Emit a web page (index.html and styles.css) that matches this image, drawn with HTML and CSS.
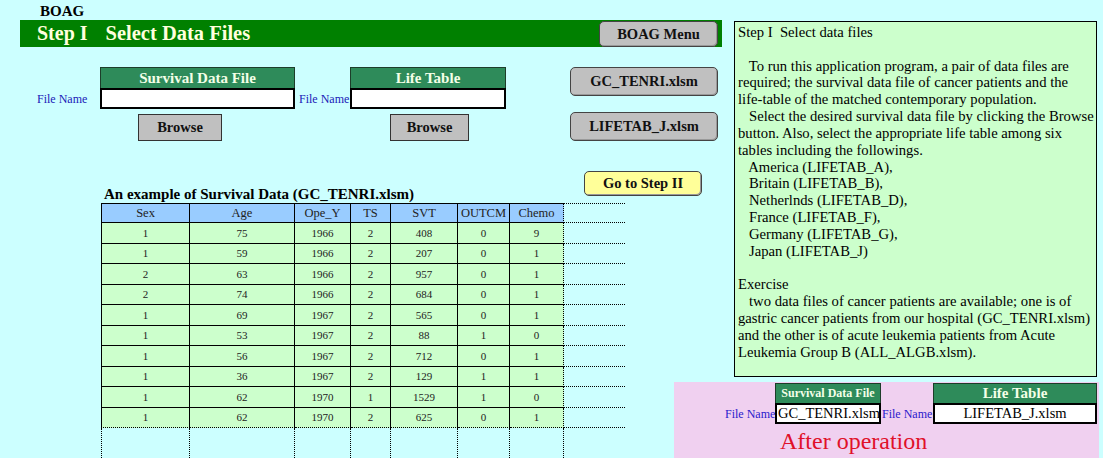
FILE: index.html
```html
<!DOCTYPE html>
<html>
<head>
<meta charset="utf-8">
<link rel="stylesheet" href="styles.css">
</head>
<body>
<div class="page">
  <div class="left">
    <div class="app-title">BOAG</div>
    <div class="band">
      <span class="band-step">Step I</span>
      <span class="band-title">Select Data Files</span>
      <div class="btn btn-round btn-menu">BOAG Menu</div>
    </div>

    <div class="files">
      <div class="fgroup fg1">
        <div class="flabel">File Name</div>
        <div class="fcol">
          <div class="fhead">Survival Data File</div>
          <div class="finput"></div>
          <div class="btn btn-browse b1">Browse</div>
        </div>
      </div>
      <div class="fgroup fg2">
        <div class="flabel">File Name</div>
        <div class="fcol">
          <div class="fhead">Life Table</div>
          <div class="finput"></div>
          <div class="btn btn-browse b2">Browse</div>
        </div>
      </div>
      <div class="samples">
        <div class="btn btn-round btn-sample">GC_TENRI.xlsm</div>
        <div class="btn btn-round btn-sample">LIFETAB_J.xlsm</div>
      </div>
    </div>

    <div class="example-row">
      <div class="example-title">An example of Survival Data (GC_TENRI.xlsm)</div>
      <div class="btn btn-round btn-go">Go to Step II</div>
    </div>

    <table class="data">
      <colgroup>
        <col style="width:89px"><col style="width:105px"><col style="width:56px"><col style="width:40px"><col style="width:67px"><col style="width:52px"><col style="width:54px"><col style="width:61px">
      </colgroup>
      <thead>
        <tr><th>Sex</th><th>Age</th><th>Ope_Y</th><th>TS</th><th>SVT</th><th>OUTCM</th><th class="last">Chemo</th><th class="extra"></th></tr>
      </thead>
      <tbody>
        <tr><td>1</td><td>75</td><td>1966</td><td>2</td><td>408</td><td>0</td><td class="last">9</td><td class="extra"></td></tr>
        <tr><td>1</td><td>59</td><td>1966</td><td>2</td><td>207</td><td>0</td><td class="last">1</td><td class="extra"></td></tr>
        <tr><td>2</td><td>63</td><td>1966</td><td>2</td><td>957</td><td>0</td><td class="last">1</td><td class="extra"></td></tr>
        <tr><td>2</td><td>74</td><td>1966</td><td>2</td><td>684</td><td>0</td><td class="last">1</td><td class="extra"></td></tr>
        <tr><td>1</td><td>69</td><td>1967</td><td>2</td><td>565</td><td>0</td><td class="last">1</td><td class="extra"></td></tr>
        <tr><td>1</td><td>53</td><td>1967</td><td>2</td><td>88</td><td>1</td><td class="last">0</td><td class="extra"></td></tr>
        <tr><td>1</td><td>56</td><td>1967</td><td>2</td><td>712</td><td>0</td><td class="last">1</td><td class="extra"></td></tr>
        <tr><td>1</td><td>36</td><td>1967</td><td>2</td><td>129</td><td>1</td><td class="last">1</td><td class="extra"></td></tr>
        <tr><td>1</td><td>62</td><td>1970</td><td>1</td><td>1529</td><td>1</td><td class="last">0</td><td class="extra"></td></tr>
        <tr class="lastrow"><td>1</td><td>62</td><td>1970</td><td>2</td><td>625</td><td>0</td><td class="last">1</td><td class="extra"></td></tr>
        <tr class="blank"><td></td><td></td><td></td><td></td><td></td><td></td><td></td><td class="extra"></td></tr>
      </tbody>
    </table>
  </div>

  <div class="panel">
<div class="pl">Step I  Select data files</div>
<div class="pl"> </div>
<div class="pl">   To run this application program, a pair of data files are</div>
<div class="pl">required; the survival data file of cancer patients and the</div>
<div class="pl">life-table of the matched contemporary population.</div>
<div class="pl">   Select the desired survival data file by clicking the Browse</div>
<div class="pl">button. Also, select the appropriate life table among six</div>
<div class="pl">tables including the followings.</div>
<div class="pl">   America (LIFETAB_A),</div>
<div class="pl">   Britain (LIFETAB_B),</div>
<div class="pl">   Netherlnds (LIFETAB_D),</div>
<div class="pl">   France (LIFETAB_F),</div>
<div class="pl">   Germany (LIFETAB_G),</div>
<div class="pl">   Japan (LIFETAB_J)</div>
<div class="pl"> </div>
<div class="pl">Exercise</div>
<div class="pl">   two data files of cancer patients are available; one is of</div>
<div class="pl">gastric cancer patients from our hospital (GC_TENRI.xlsm)</div>
<div class="pl">and the other is of acute leukemia patients from Acute</div>
<div class="pl">Leukemia Group B (ALL_ALGB.xlsm).</div>
  </div>

  <div class="after">
    <div class="after-files">
      <div class="alabel a1">File Name</div>
      <div class="acol acol1">
        <div class="ahead ahead1">Survival Data File</div>
        <div class="ainput ainput1">GC_TENRI.xlsm</div>
      </div>
      <div class="alabel a2">File Name</div>
      <div class="acol acol2">
        <div class="ahead ahead2">Life Table</div>
        <div class="ainput ainput2">LIFETAB_J.xlsm</div>
      </div>
    </div>
    <div class="after-caption">After operation</div>
  </div>
</div>
</body>
</html>
```

FILE: styles.css
```css
html, body {
  margin: 0;
  padding: 0;
  background: #ccffff;
  font-family: "Liberation Serif", "Times New Roman", serif;
  color: #000;
}

.page {
  width: 1103px;
  height: 458px;
  overflow: hidden;
  display: grid;
  grid-template-columns: 674px 60px 369px;
  grid-template-rows: 382px 76px;
}

.left {
  grid-column: 1;
  grid-row: 1 / 3;
  width: 730px;
  position: relative;
  z-index: 1;
}

.app-title {
  height: 20px;
  padding-left: 40px;
  font-weight: bold;
  font-size: 15px;
  line-height: 22px;
}

.band {
  margin-left: 20px;
  width: 702px;
  height: 27px;
  background: #008000;
  display: flex;
  align-items: center;
  color: #ffffdd;
  font-weight: bold;
}

.band-step {
  margin-left: 17px;
  font-size: 20px;
}

.band-title {
  margin-left: 18px;
  font-size: 20.5px;
}

.btn {
  box-sizing: border-box;
  background: #c0c0c0;
  border: 1px solid #333;
  font-weight: bold;
  font-size: 14.5px;
  display: flex;
  align-items: center;
  justify-content: center;
  color: #111;
  flex-shrink: 0;
}

.btn-round {
  border-radius: 5px;
  border-color: #444;
  box-shadow: inset -1px -1px 0 #999;
}

.btn-menu {
  margin-left: auto;
  margin-right: 4px;
  width: 119px;
  height: 26px;
  align-self: flex-end;
}

.files {
  margin-top: 20px;
  display: flex;
  padding-left: 37px;
}

.files > * { flex-shrink: 0; }

.fgroup {
  display: flex;
}

.flabel {
  margin-top: 21px;
  height: 21px;
  line-height: 22px;
  font-size: 12px;
  color: #1a1ab8;
  white-space: nowrap;
}

.fg1 .flabel { width: 63px; }
.fg2 { margin-left: 4px; }
.fg2 .flabel { width: 51px; }

.fcol { display: flex; flex-direction: column; }
.fg1 .fcol { width: 195px; }
.fg2 .fcol { width: 156px; }

.fhead {
  box-sizing: border-box;
  height: 21px;
  background: #2e8b5a;
  border: 1px solid #1d3d2a;
  border-bottom: none;
  color: #f4ffe8;
  font-weight: bold;
  font-size: 15px;
  text-align: center;
  line-height: 20px;
}

.finput {
  box-sizing: border-box;
  height: 21px;
  background: #fff;
  border: 2px solid #000;
}

.btn-browse {
  margin-top: 5px;
  height: 27px;
}

.b1 { margin-left: 38px; width: 84px; }
.b2 { margin-left: 40px; width: 79px; }

.samples {
  margin-left: 64px;
  width: 148px;
  display: flex;
  flex-direction: column;
  gap: 16px;
}

.btn-sample {
  height: 29px;
}

.example-row {
  margin-top: 30px;
  display: flex;
  height: 32px;
}

.example-title {
  flex-shrink: 0;
  align-self: flex-end;
  margin-left: 104px;
  width: 480px;
  font-weight: bold;
  font-size: 15px;
  line-height: 16px;
  margin-bottom: 1px;
  white-space: nowrap;
}

.btn-go {
  width: 118px;
  height: 25px;
  background: #ffff99;
}

.data {
  margin-left: 101px;
  border-collapse: separate;
  border-spacing: 0;
  table-layout: fixed;
  width: 524px;
  font-size: 11px;
}

.data th, .data td {
  box-sizing: border-box;
  padding: 0;
  text-align: center;
  border-right: 1px solid #000;
  border-bottom: 1px solid #000;
  font-weight: normal;
  color: #222;
}

.data th {
  height: 20px;
  background: #99ccff;
  border-top: 1px solid #000;
  font-size: 12.5px;
}

.data td {
  height: 20.5px;
  background: #ccffcc;
}

.data tr > :first-child {
  border-left: 1px solid #000;
}

.data .last {
  border-right: 1px dotted #000;
}

.data th.extra,
.data td.extra {
  background: transparent;
  border-right: none;
  border-bottom: 1px dotted #000;
}

.data th.extra {
  border-top: 1px dotted #000;
}

.data tr.lastrow td {
  border-bottom: 1px dotted #000;
}

.data tr.blank td {
  height: 40px;
  background: transparent;
  border-bottom: none;
  border-right: 1px dotted #000;
}

.data tr.blank td:first-child {
  border-left: 1px dotted #000;
}

.data tr.blank td.extra {
  border-right: none;
  border-bottom: none;
}

.panel {
  grid-column: 3;
  grid-row: 1;
  margin-top: 21px;
  width: 363px;
  height: 356px;
  box-sizing: border-box;
  background: #ccffcc;
  border: 1px solid #000;
  padding: 2px 0 0 3px;
  overflow: hidden;
  font-size: 14.67px;
  line-height: 16.84px;
}

.pl {
  white-space: pre;
  height: 16.84px;
}

.after {
  grid-column: 2 / 4;
  grid-row: 2;
  width: 425px;
  background: #f0d0f0;
}

.after-files {
  display: flex;
  padding-top: 1px;
  padding-left: 51px;
}

.alabel {
  margin-top: 20px;
  height: 21px;
  line-height: 23px;
  font-size: 12px;
  color: #2a1acc;
  white-space: nowrap;
}

.a1 { width: 50px; }
.a2 { width: 52px; padding-left: 1px; box-sizing: border-box; }

.acol1 { width: 106px; }
.acol2 { width: 164px; }

.ahead {
  box-sizing: border-box;
  height: 20px;
  background: #2e8b5a;
  border: 1px solid #1d3d2a;
  border-bottom: none;
  color: #f4ffe8;
  font-weight: bold;
  text-align: center;
}

.ahead1 { font-size: 12px; line-height: 19px; }
.ahead2 { font-size: 15px; line-height: 19px; }

.ainput {
  box-sizing: border-box;
  height: 21px;
  background: #fff;
  border: 2px solid #000;
  font-size: 14.5px;
  line-height: 17px;
  white-space: nowrap;
  overflow: hidden;
}

.ainput1 { padding-left: 1px; }
.ainput2 { text-align: center; }

.after-caption {
  margin-left: 106px;
  margin-top: 2px;
  font-size: 24px;
  line-height: 30px;
  color: #e0102a;
}
```
